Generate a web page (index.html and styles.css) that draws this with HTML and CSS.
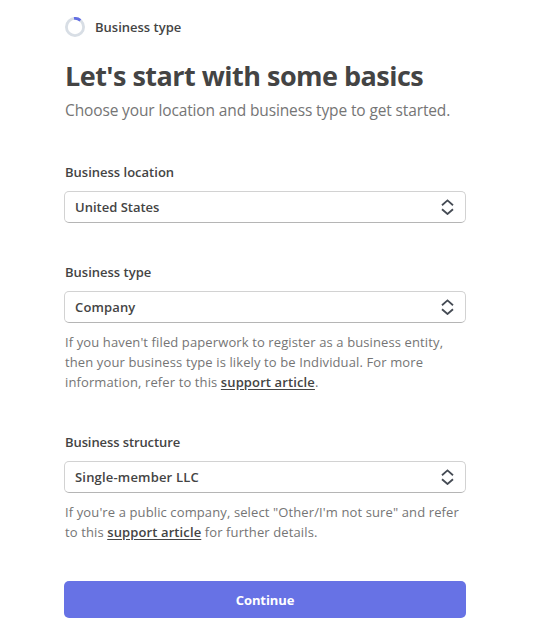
FILE: index.html
```html
<!DOCTYPE html>
<html lang="en">
<head>
  <meta charset="UTF-8">
  <title>Business type</title>
  <link rel="stylesheet" href="styles.css">
</head>
<body>
  <main class="container">
    <div class="step">
      <svg class="progress" width="20" height="20" viewBox="0 0 20 20" fill="none" stroke-width="2.8">
        <circle cx="10" cy="10" r="8.6" stroke="#d8dee5"/>
        <path d="M9 1.46A8.6 8.6 0 0 1 15.4 3.3" stroke="#626ee3"/>
      </svg>
      <span class="step-name">Business type</span>
    </div>
    <h1>Let's start with some basics</h1>
    <p class="intro">Choose your location and business type to get started.</p>

    <form>
      <div class="field">
        <div class="label" id="location-label">Business location</div>
        <button type="button" class="select" aria-labelledby="location-label">
          <span>United States</span>
          <svg class="arrows" width="13" height="16" viewBox="0 0 13 16"><path d="M1 6.2 6.5 1.4 12 6.2M1 10.2 6.5 15 12 10.2"/></svg>
        </button>
      </div>

      <div class="field field-wide">
        <div class="label" id="type-label">Business type</div>
        <button type="button" class="select" aria-labelledby="type-label">
          <span class="value-type">Company</span>
          <svg class="arrows" width="13" height="16" viewBox="0 0 13 16"><path d="M1 6.2 6.5 1.4 12 6.2M1 10.2 6.5 15 12 10.2"/></svg>
        </button>
        <p class="help">If you haven't filed paperwork to register as a business entity,<br>
          then your business type is likely to be Individual. For more<br>
          information, refer to this <a href="#">support article</a>.</p>
      </div>

      <div class="field">
        <div class="label label-structure" id="structure-label">Business structure</div>
        <button type="button" class="select" aria-labelledby="structure-label">
          <span class="value-structure">Single-member LLC</span>
          <svg class="arrows" width="13" height="16" viewBox="0 0 13 16"><path d="M1 6.2 6.5 1.4 12 6.2M1 10.2 6.5 15 12 10.2"/></svg>
        </button>
        <p class="help">If you're a public company, select "Other/I'm not sure" and refer<br>
          to this <a href="#">support article</a> for further details.</p>
      </div>

      <button type="submit" class="continue">Continue</button>
    </form>
  </main>
</body>
</html>
```

FILE: styles.css
```css
body {
  margin: 0;
  background: #fff;
  color: #444;
  font-family: "Open Sans", "Noto Sans", sans-serif;
  font-size: 13px;
  line-height: 20px;
}
.container {
  width: 402px;
  margin-left: 64px;
  padding-top: 17px;
}
.step {
  display: flex;
  align-items: center;
  gap: 10px;
  height: 20px;
  padding-left: 1px;
}
.step-name, .label {
  font-weight: 600;
  white-space: nowrap;
}
h1 {
  margin: 21px 0 0 1px;
  font-size: 27px;
  line-height: 36px;
  font-weight: 700;
  letter-spacing: -0.52px;
  white-space: nowrap;
}
.intro {
  margin: 4px 0 0 1px;
  color: #757575;
  font-size: 15.5px;
  line-height: 24px;
  letter-spacing: -0.13px;
  white-space: nowrap;
}
form {
  margin-top: 40px;
}
.field {
  margin-bottom: 39px;
}
.field-wide {
  margin-bottom: 40px;
}
.label {
  margin: 0 0 9px 1px;
}
.label-structure {
  letter-spacing: -0.1px;
}
.select {
  display: flex;
  align-items: center;
  justify-content: space-between;
  box-sizing: border-box;
  width: 100%;
  height: 32px;
  padding: 0 11px 0 10px;
  border: 1px solid #d2d2d2;
  border-bottom-color: #b5b5b5;
  border-radius: 5px;
  background: #fff;
  color: #444;
  font: inherit;
  font-weight: 600;
}
.value-type {
  letter-spacing: 0.15px;
}
.value-structure {
  letter-spacing: 0.18px;
}
.arrows {
  fill: none;
  stroke: #454b54;
  stroke-width: 1.8;
}
.help {
  margin: 9px 0 0 1px;
  color: #757575;
  letter-spacing: 0.115px;
  white-space: nowrap;
}
.help a {
  color: #444;
  font-weight: 600;
  text-underline-offset: 2px;
}
.continue {
  display: block;
  width: 100%;
  height: 37px;
  border: none;
  border-radius: 5px;
  background: #6772e5;
  color: #fff;
  font: inherit;
  font-weight: 700;
  letter-spacing: -0.1px;
}
```
